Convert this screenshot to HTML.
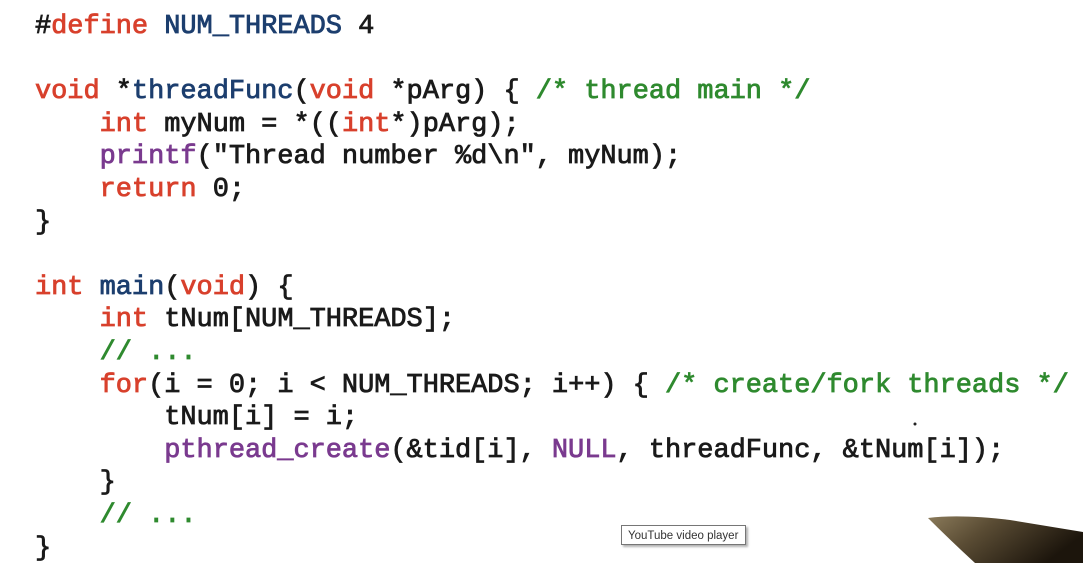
<!DOCTYPE html>
<html><head><meta charset="utf-8"><style>
html,body{margin:0;padding:0;background:#fff;width:1083px;height:563px;overflow:hidden;position:relative}
pre{position:absolute;left:35px;top:11px;margin:0;font-family:"Liberation Mono",monospace;font-size:27px;line-height:32.6px;color:#1a1a1a;-webkit-text-stroke:0.8px;letter-spacing:-0.05px}
.k{color:#d8402c}.b{color:#1c3e6e}.g{color:#2f8a2f}.p{color:#7a3a8f}
.tip{position:absolute;left:621px;top:525px;width:125px;height:20px;border:1px solid #767676;background:#fff;font-family:"Liberation Sans",sans-serif;font-size:11.5px;color:#333;line-height:20px;padding-left:6px;box-sizing:border-box;box-shadow:2px 2px 2px rgba(0,0,0,.3)}
</style></head><body>
<pre>#<span class="k">define</span> <span class="b">NUM_THREADS</span> 4

<span class="k">void</span> *<span class="b">threadFunc</span>(<span class="k">void</span> *pArg) { <span class="g">/* thread main */</span>
    <span class="k">int</span> myNum = *((<span class="k">int</span>*)pArg);
    <span class="p">printf</span>("Thread number %d\n", myNum);
    <span class="k">return</span> 0;
}

<span class="k">int</span> <span class="b">main</span>(<span class="k">void</span>) {
    <span class="k">int</span> tNum[NUM_THREADS];
    <span class="g">// ...</span>
    <span class="k">for</span>(i = 0; i &lt; NUM_THREADS; i++) { <span class="g">/* create/fork threads */</span>
        tNum[i] = i;
        <span class="p">pthread_create</span>(&amp;tid[i], <span class="p">NULL</span>, threadFunc, &amp;tNum[i]);
    }
    <span class="g">// ...</span>
}</pre>
<svg style="position:absolute;left:0;top:0" width="1083" height="563">
<defs><linearGradient id="pg" x1="0" y1="0" x2="1" y2="0.4"><stop offset="0" stop-color="#8a7a5a"/><stop offset="0.4" stop-color="#5a4c34"/><stop offset="1" stop-color="#1c150c"/></linearGradient></defs>
<path d="M928 518 Q960 514 1010 520 L1083 532 L1083 563 L975 563 Q950 540 928 518 Z" fill="url(#pg)"/>
<circle cx="915" cy="424" r="1.5" fill="#222"/>
</svg>
<div class="tip">YouTube video player</div>
</body></html>
